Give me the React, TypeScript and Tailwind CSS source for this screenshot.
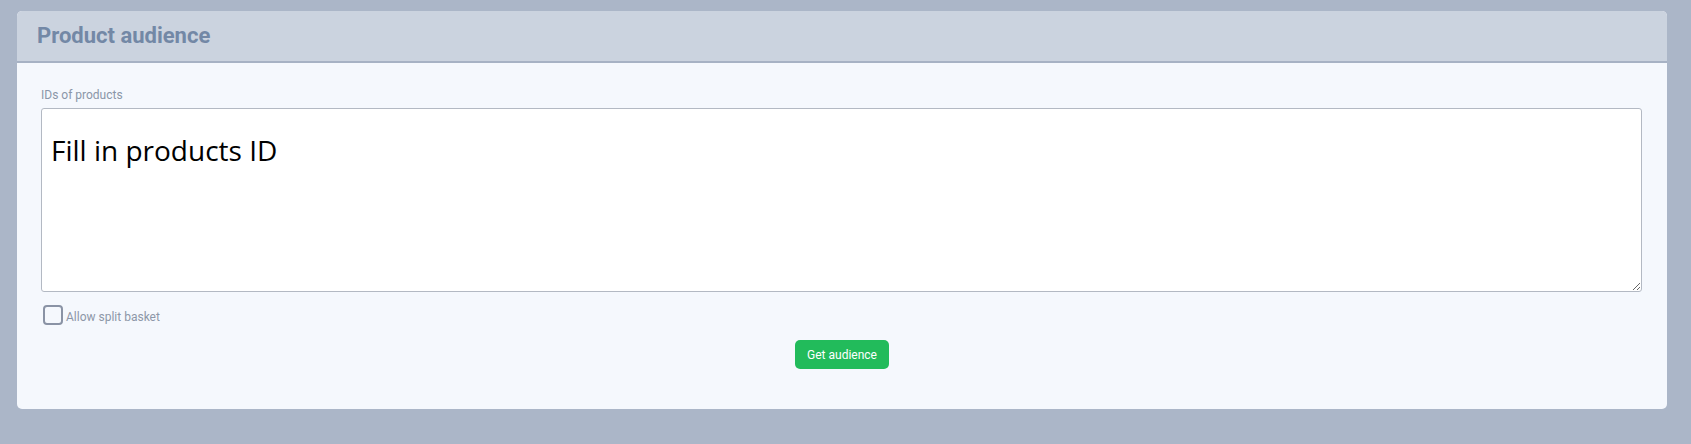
import { useState } from 'react';

const App = () => {
  const [ids, setIds] = useState('');
  const [split, setSplit] = useState(false);

  return (
    <div className="min-h-screen w-full bg-[#abb6c8] pt-[11px] pl-[17px] pb-[36px] font-['Roboto',sans-serif]">
      <div className="w-[1650px] rounded-[5px] bg-[#f5f8fd] overflow-hidden">
        {/* Header */}
        <div className="h-[52px] bg-[#cbd3df] border-b-2 border-[#a7b2c4] flex items-center px-[20px]">
          <h2 className="text-[22px] font-bold text-[#7388a6] leading-none">Product audience</h2>
        </div>

        {/* Body */}
        <div className="px-[24px] pt-[24px] pb-[40px]">
          <label className="block text-[12px] leading-[16px] text-[#8a96a8] mb-[5px]">IDs of products</label>
          <textarea
            value={ids}
            onChange={(e) => setIds(e.target.value)}
            placeholder="Fill in products ID"
            className="block w-[1601px] h-[184px] bg-white border border-[#b3b9c3] rounded-[3px] px-[9px] pt-[22px] text-[28px] leading-[38px] text-black placeholder:text-black font-['Open_Sans',sans-serif] outline-none"
          />
          <label className="mt-[13px] ml-[2px] flex items-center gap-[3px] cursor-pointer select-none w-fit">
            <input
              type="checkbox"
              checked={split}
              onChange={(e) => setSplit(e.target.checked)}
              className="appearance-none w-[20px] h-[20px] rounded-[4px] border-2 border-[#8a93a5] bg-transparent checked:bg-[#22bb5b] checked:border-[#22bb5b]"
            />
            <span className="text-[12px] leading-[14px] pt-[3px] text-[#8d97a8]">Allow split basket</span>
          </label>
          <div className="flex justify-center mt-[15px]">
            <button className="w-[94px] h-[29px] rounded-[5px] bg-[#22bb5b] text-white text-[12px] font-normal hover:bg-[#1ea851]">
              Get audience
            </button>
          </div>
        </div>
      </div>
    </div>
  );
};

export default App;
